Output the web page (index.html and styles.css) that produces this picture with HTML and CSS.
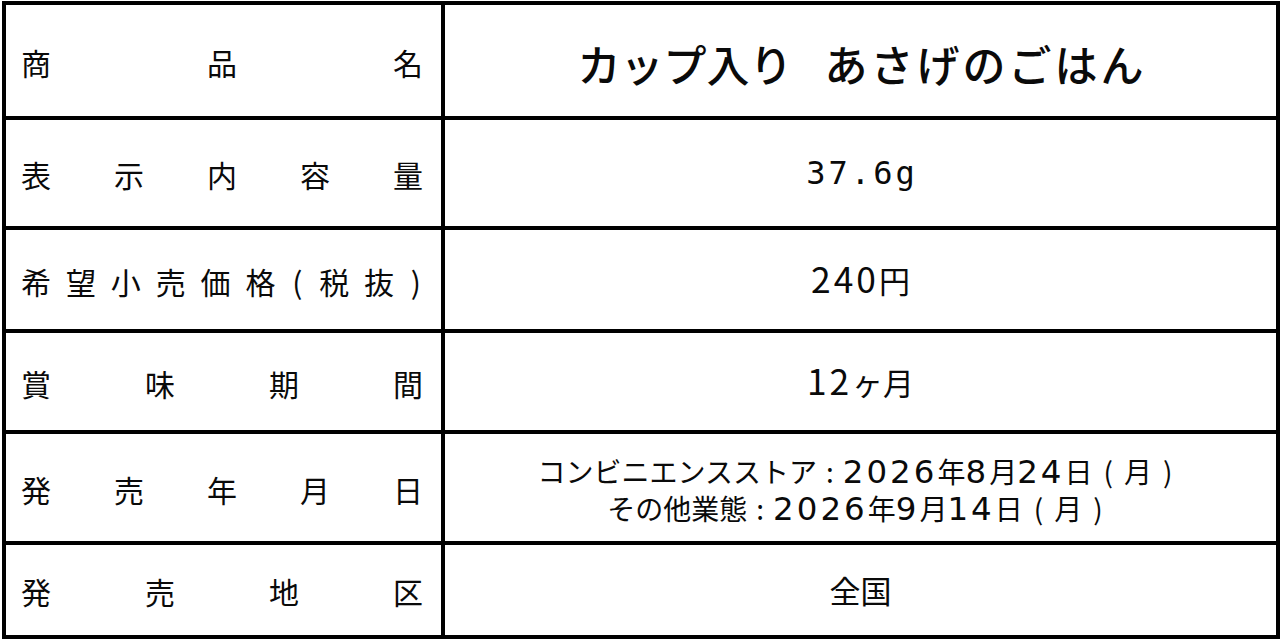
FILE: index.html
```html
<!DOCTYPE html>
<html lang="ja">
<head>
<meta charset="utf-8">
<link rel="stylesheet" href="styles.css">
</head>
<body>
<div class="sheet">
  <div class="label"><span>商</span><span>品</span><span>名</span></div>
  <div class="value title"><span>カップ入り</span><span class="title-b">あさげのごはん</span></div>

  <div class="label"><span>表</span><span>示</span><span>内</span><span>容</span><span>量</span></div>
  <div class="value"><span class="mono">37.6g</span></div>

  <div class="label"><span>希</span><span>望</span><span>小</span><span>売</span><span>価</span><span>格</span><span class="paren">(</span><span>税</span><span>抜</span><span class="paren">)</span></div>
  <div class="value"><span><span class="num">240</span>円</span></div>

  <div class="label"><span>賞</span><span>味</span><span>期</span><span>間</span></div>
  <div class="value"><span><span class="num">12</span>ヶ月</span></div>

  <div class="label"><span>発</span><span>売</span><span>年</span><span>月</span><span>日</span></div>
  <div class="value dates">
    <div class="dline">コンビニエンスストア<span class="colon">:</span><span class="dnum">2026</span>年<span class="dnum">8</span>月<span class="dnum">24</span>日<span class="par">(</span>月<span class="par">)</span></div>
    <div class="dline">その他業態<span class="colon">:</span><span class="dnum">2026</span>年<span class="dnum">9</span>月<span class="dnum">14</span>日<span class="par">(</span>月<span class="par">)</span></div>
  </div>

  <div class="label"><span>発</span><span>売</span><span>地</span><span>区</span></div>
  <div class="value">全国</div>
</div>
</body>
</html>
```

FILE: styles.css
```css
html, body {
  margin: 0;
  padding: 0;
  background: #ffffff;
}

body {
  font-family: "Noto Sans CJK JP", "Noto Sans", sans-serif;
  color: #0a0a0a;
}

.sheet {
  margin: 1px 0 0 2px;
  width: 1278px;
  height: 638px;
  box-sizing: border-box;
  padding: 4px;
  gap: 4px;
  background: #000000;
  display: grid;
  grid-template-columns: 435px 831px;
  grid-template-rows: 111px 106px 99px 97px 107px 90px;
}

.label {
  background: #ffffff;
  display: flex;
  align-items: center;
  justify-content: space-between;
  padding: 2px 18px 0 15px;
  font-size: 30px;
  line-height: 1;
}

.label .paren {
  width: 14px;
  text-align: center;
}

.value {
  background: #ffffff;
  display: flex;
  flex-direction: column;
  align-items: center;
  justify-content: center;
  font-size: 31px;
  line-height: 1.2;
}

.title {
  flex-direction: row;
  font-size: 43px;
  font-weight: 500;
  padding-top: 6px;
  gap: 32px;
}

.title-b {
  letter-spacing: 3px;
  margin-right: -3px;
}

.mono {
  font-family: "DejaVu Sans Mono", monospace;
  font-size: 32px;
  letter-spacing: 3px;
  margin-right: -3px;
}

.num {
  font-size: 1.14em;
  letter-spacing: 3px;
  line-height: 1;
}

.dates {
  font-size: 28px;
  line-height: 1;
  gap: 9px;
  padding-top: 2px;
}

.dline {
  display: flex;
  align-items: baseline;
  height: 28px;
}

.dnum {
  font-family: "DejaVu Sans", sans-serif;
  font-size: 1.16em;
  letter-spacing: 3px;
  line-height: 1;
}

.colon {
  margin: 0 9px;
}

.par {
  margin: 0 11px;
}
```
